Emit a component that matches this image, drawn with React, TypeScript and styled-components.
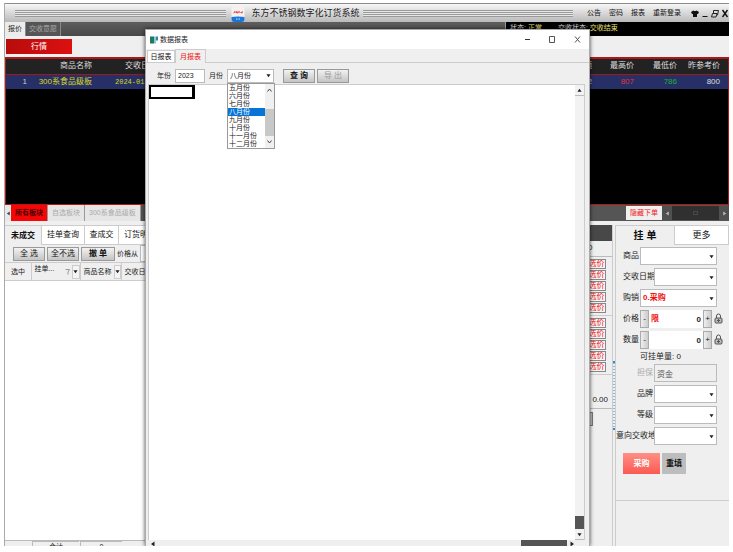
import React from "react";
import styled, { createGlobalStyle, css } from "styled-components";

const Global = createGlobalStyle`
  * { box-sizing: border-box; }
  body { margin: 0; background: #fff; }
  body, button, input, select, table {
    font-family: "Liberation Sans", "Noto Sans CJK SC", sans-serif;
    font-size: 8px;
    line-height: 10px;
    color: #222;
  }
  button, input, select { margin: 0; padding: 0; border-radius: 0; }
  button { white-space: pre; }
`;

const Frame = styled.div`
  position: relative;
  display: flex;
  flex-direction: column;
  height: calc(100vh - 9px);
  margin: 3px 4px 6px;
  overflow: hidden;
  background: #efefef;
  border-left: 1px solid #aaa;
`;

/* ---------- title bar ---------- */
const TitleBar = styled.header`
  flex: none;
  display: flex;
  align-items: center;
  height: 19px;
  border-top: 1px solid #8c8c8c;
  background: linear-gradient(#f7f7f7, #d8d8d8 50%, #b9b9b9);
`;
const Rules = styled.div<{ $before?: boolean }>`
  flex: 1 1 0;
  height: 7px;
  margin-left: ${(p) => (p.$before ? 10 : 3)}px;
  background: repeating-linear-gradient(#999 0 1px, #e8e8e8 1px 2px);
`;
const Logo = styled.svg`
  width: 14px;
  height: 17px;
  margin: 0 7px 0 5px;
`;
const AppTitle = styled.h1`
  margin: 0;
  font-size: 9px;
  line-height: 12px;
  font-weight: 400;
  white-space: nowrap;
`;
const TopMenu = styled.nav`
  display: flex;
  gap: 8px;
  margin-left: 14px;
`;
const Plain = styled.button`
  border: 0;
  background: none;
  font-size: 7px;
  color: #111;
`;
const WindowKeys = styled.div`
  display: flex;
  gap: 2px;
  margin-left: 10px;
`;
const Key = styled.button`
  display: flex;
  border: 0;
  background: none;
  svg { width: 8px; height: 9px; }
`;

/* ---------- upper strips ---------- */
const DarkStrip = styled.div`
  flex: none;
  display: flex;
  height: 14px;
  background: linear-gradient(#5e5e5e, #484848);
`;
const StripTab = styled.button<{ $on?: boolean }>`
  border: 0;
  border-right: 1px solid #888;
  padding: 0 3px;
  font-size: 7px;
  color: ${(p) => (p.$on ? "#222" : "#aaa")};
  background: ${(p) => (p.$on ? "#ececec" : "#555")};
`;
const Status = styled.div`
  display: flex;
  gap: 16px;
  width: 224px;
  margin-left: auto;
  padding: 1px 4px;
  font-size: 7px;
  color: #ddd;
  background: #000;
  border-left: 1px solid #999;
  b { font-weight: 400; color: #e8e070; }
`;
const QuoteTools = styled.div`
  flex: none;
  height: 21px;
  padding: 3px 1px;
  background: #efefef;
`;
const MarketButton = styled.button`
  width: 66px;
  height: 15px;
  border: 0;
  color: #fff;
  background: linear-gradient(90deg, #b80c0c, #dc1010);
`;
const QuoteArea = styled.div`
  flex: none;
  height: 148px;
  background: #000;
  border: 1px solid #b01818;
  border-top-width: 2px;
`;
const QuoteTable = styled.table`
  width: 100%;
  table-layout: fixed;
  border-collapse: collapse;
  th, td {
    height: 15px;
    padding: 0;
    text-align: right;
    font-weight: 400;
    white-space: nowrap;
  }
  th { color: #ddd; background: #222; border-bottom: 1px solid #a01818; }
  td { color: #d8d820; background: #273066; }
`;
const Col = styled.col<{ $w?: number }>`
  width: ${(p) => (p.$w ? `${p.$w}px` : "auto")};
`;
const Tint = styled.td<{ $c: string }>`
  && { color: ${(p) => p.$c}; }
`;
const DateCell = styled.td`
  font-family: "Liberation Mono", monospace;
  font-size: 7px;
`;

const BoardStrip = styled.div`
  flex: none;
  display: flex;
  height: 16px;
  background: #555;
`;
const BoardTab = styled.button<{ $on?: boolean }>`
  border: 0;
  border-right: 1px solid #999;
  padding: 0 4px;
  font-size: 7px;
  font-weight: ${(p) => (p.$on ? 700 : 400)};
  color: ${(p) => (p.$on ? "#400" : "#aaa")};
  background: ${(p) => (p.$on ? "#f60606" : "#e6e6e6")};
`;
const ArrowKey = styled.button<{ $dark?: boolean }>`
  display: flex;
  flex: none;
  align-items: center;
  justify-content: center;
  width: ${(p) => (p.$dark ? 10 : 6)}px;
  border: 0;
  background: ${(p) => (p.$dark ? "#505050" : "#e8e8e8")};
  color: ${(p) => (p.$dark ? "#bbb" : "#444")};
  svg { width: 5px; height: 5px; }
`;
const HideOrder = styled.button`
  width: 36px;
  margin: 1px 0 1px auto;
  border: 0;
  font-size: 7px;
  color: #f01818;
  background: #efefef;
`;
const DarkTrack = styled.div`
  display: flex;
  align-items: stretch;
  justify-content: space-between;
  width: 67px;
  margin: 1px 0;
  background: #303030;
  i { align-self: center; width: 5px; height: 4px; border: 1px solid #484848; }
`;

/* ---------- lower area ---------- */
const Lower = styled.main`
  flex: 1;
  min-height: 0;
  display: flex;
  padding-top: 4px;
  background: #efefef;
`;
const Orders = styled.section`
  flex: 1;
  min-width: 0;
  display: flex;
  flex-direction: column;
  overflow: hidden;
`;
const Tabs = styled.div`
  flex: none;
  display: flex;
  height: 20px;
`;
const Tab = styled.button<{ $on?: boolean; $w?: number }>`
  flex: ${(p) => (p.$w ? `0 0 ${p.$w}px` : "1 1 0")};
  border: 1px solid #ccc;
  border-left-width: 0;
  border-bottom-width: ${(p) => (p.$on ? 0 : 1)}px;
  font-size: 8px;
  font-weight: ${(p) => (p.$on ? 700 : 400)};
  color: #111;
  background: ${(p) => (p.$on ? "#efefef" : "#fff")};
`;
const Tools = styled.div`
  flex: none;
  display: flex;
  gap: 2px;
  align-items: center;
  height: 17px;
  padding-left: 8px;
  font-size: 7px;
  label { white-space: nowrap; }
`;
const Button = styled.button<{ $w: number; $off?: boolean; $bold?: boolean }>`
  flex: none;
  width: ${(p) => p.$w}px;
  height: 14px;
  border: 1px solid #999;
  font-size: 8px;
  font-weight: ${(p) => (p.$bold ? 700 : 400)};
  color: ${(p) => (p.$off ? "#999" : "#111")};
  background: linear-gradient(#f2f2f2, #c4c4c4);
`;
const TextBox = styled.input<{ $w?: number; $bold?: boolean; $right?: boolean }>`
  ${(p) => (p.$w ? css`flex: none; width: ${p.$w}px;` : css`flex: 1; min-width: 0; width: 0;`)}
  height: 100%;
  padding: 0 2px;
  border: 1px solid #bbb;
  font-weight: ${(p) => (p.$bold ? 700 : 400)};
  text-align: ${(p) => (p.$right ? "right" : "left")};
  background: #fff;
  &:disabled { color: #555; background: #efefef; }
`;
const ListTable = styled.table`
  border-collapse: collapse;
  table-layout: fixed;
  width: 300px;
  flex: none;
  th {
    height: 18px;
    padding: 0 0 0 3px;
    font-size: 7px;
    font-weight: 400;
    text-align: left;
    border: 1px solid #ccc;
    border-left-width: 0;
  }
  th:first-child { padding-left: 6px; }
`;
const HeadCell = styled.span<{ $up?: boolean }>`
  display: flex;
  align-items: center;
  gap: 2px;
  white-space: nowrap;
  span { flex: 1; padding-bottom: ${(p) => (p.$up ? 6 : 0)}px; }
`;
const MiniDrop = styled.button`
  display: flex;
  align-items: center;
  justify-content: center;
  width: 8px;
  height: 14px;
  border: 1px solid #ccc;
  background: #f4f4f4;
  svg { width: 5px; height: 5px; }
`;
const FilterIcon = styled.svg`
  width: 5px;
  height: 6px;
`;
const Blank = styled.div`
  flex: 1;
  background: #fff;
`;
const Totals = styled.div`
  flex: none;
  display: flex;
  gap: 1px;
  height: 6px;
  padding-left: 27px;
  overflow: hidden;
  font-size: 7px;
  line-height: 9px;
  text-align: center;
  border-top: 1px solid #bbb;
  span { width: 47px; border-top: 1px solid #bbb; border-left: 1px solid #bbb; }
  span + span { width: 42px; }
`;

const Quotes = styled.aside`
  flex: none;
  width: 24px;
  display: flex;
  flex-direction: column;
  overflow: hidden;
`;
const QuotesHead = styled.div`
  height: 16px;
  background: #484848;
`;
const Figure = styled.div<{ $h: number; $left?: boolean }>`
  display: flex;
  align-items: flex-end;
  justify-content: ${(p) => (p.$left ? "flex-start" : "flex-end")};
  height: ${(p) => p.$h}px;
  padding: 0 4px 3px 0;
  border-bottom: 1px solid #bbb;
`;
const PickGroup = styled.div`
  display: grid;
  grid-template-columns: 18px;
  grid-auto-rows: 10px;
  gap: 1px;
  padding: 2px 0;
  border-bottom: 1px solid #ccc;
`;
const Pick = styled.button`
  overflow: hidden;
  border: 1px solid #888;
  border-left: 0;
  font-size: 8px;
  line-height: 8px;
  color: #f01818;
  background: #f4f4f4;
`;
const PartButton = styled.button`
  width: 5px;
  height: 14px;
  margin-top: 3px;
  border: 1px solid #777;
  background: #bbb;
`;
const Splitter = styled.div`
  flex: none;
  width: 4px;
  border: solid #ccc;
  border-width: 0 1px;
  padding-top: 136px;
`;
const Grip = styled.div`
  height: 69px;
  border: solid #2c8fd8;
  border-width: 2px 0;
  background: repeating-linear-gradient(#8fb8d8 0 1px, #efefef 1px 3px);
`;

const OrderPanel = styled.section`
  flex: none;
  width: 113px;
  display: flex;
  flex-direction: column;
`;
const BigTab = styled(Tab)`
  font-size: ${(p) => (p.$on ? 10 : 9)}px;
`;
const Form = styled.form`
  display: flex;
  flex-direction: column;
  gap: 3px;
  height: 256px;
  padding: 2px 12px 0 0;
  border-bottom: 1px solid #ccc;
`;
const Field = styled.div<{ $label: number; $off?: boolean; $end?: boolean }>`
  display: grid;
  grid-template-columns: ${(p) => p.$label}px 1fr;
  align-items: center;
  height: 18px;
  label {
    padding: ${(p) => (p.$end ? "0 1px 0 0" : "0 0 0 7px")};
    text-align: ${(p) => (p.$end ? "right" : "left")};
    white-space: nowrap;
    color: ${(p) => (p.$off ? "#aaa" : "#222")};
  }
`;
const Picker = styled.div`
  display: grid;
  height: 100%;
  align-items: center;
  svg { grid-area: 1 / 1; justify-self: end; width: 5px; height: 5px; margin-right: 3px; pointer-events: none; }
`;
const Select = styled.select<{ $red?: boolean }>`
  grid-area: 1 / 1;
  appearance: none;
  width: 100%;
  height: 100%;
  padding-left: 2px;
  border: 1px solid #bbb;
  font-weight: ${(p) => (p.$red ? 700 : 400)};
  color: ${(p) => (p.$red ? "#f01010" : "#222")};
  background: #fff;
`;
const Stepper = styled.div`
  display: flex;
  height: 100%;
  margin-right: -6px;
`;
const StepBox = styled.div`
  flex: 1;
  display: flex;
  align-items: center;
  min-width: 0;
  background: #fff;
  b { color: #f01010; padding-left: 2px; }
  input { border: 0; }
`;
const Step = styled.button`
  width: 9px;
  border: 1px solid #aaa;
  background: linear-gradient(90deg, #eee, #ccc);
`;
const Lock = styled.svg`
  width: 9px;
  height: 11px;
  margin: 3px 0 0 2px;
`;
const Available = styled.div`
  height: 9px;
  padding-left: 24px;
  line-height: 9px;
  white-space: nowrap;
`;
const Actions = styled.div`
  display: flex;
  gap: 2px;
  padding: 5px 0 0 7px;
`;
const Act = styled.button<{ $buy?: boolean }>`
  width: ${(p) => (p.$buy ? 37 : 24)}px;
  height: 21px;
  border: 0;
  font-weight: 700;
  color: ${(p) => (p.$buy ? "#fff" : "#111")};
  background: ${(p) => (p.$buy ? "linear-gradient(#ff8f85, #fb5a52)" : "#bdbdbd")};
`;

/* ---------- report window ---------- */
const Report = styled.section`
  position: absolute;
  top: 26px;
  bottom: 0;
  left: 140px;
  right: 139px;
  display: flex;
  flex-direction: column;
  background: #efefef;
  border: solid #aaa;
  border-width: 1px 1px 0 1px;
  box-shadow: 0 0 4px rgba(0, 0, 0, 0.7);
`;
const ReportTitle = styled.header`
  flex: none;
  display: flex;
  align-items: center;
  height: 19px;
  padding: 0 8px 0 4px;
  background: #fff;
  h2 { flex: 1; margin: 0 0 0 2px; font-size: 7px; font-weight: 400; }
`;
const ReportIcon = styled.svg`
  width: 8px;
  height: 8px;
`;
const ReportKey = styled.button`
  display: flex;
  margin-left: 18px;
  border: 0;
  background: none;
  svg { width: 7px; height: 7px; }
`;
const ReportTabs = styled.div`
  flex: none;
  display: flex;
  align-items: flex-end;
  height: 14px;
  padding-left: 1px;
  border-bottom: 1px solid #ccc;
`;
const ReportTab = styled.button<{ $on?: boolean }>`
  width: ${(p) => (p.$on ? 31 : 28)}px;
  height: ${(p) => (p.$on ? 14 : 12)}px;
  margin-bottom: ${(p) => (p.$on ? -1 : 0)}px;
  border: 1px solid #ccc;
  border-bottom: 0;
  font-size: 7px;
  color: ${(p) => (p.$on ? "#f01010" : "#111")};
  background: ${(p) => (p.$on ? "#efefef" : "#fff")};
`;
const Filters = styled.form`
  flex: none;
  display: flex;
  align-items: center;
  height: 21px;
  padding: 4px 0 0 11px;
  font-size: 7px;
  input, select { font-size: 7px; }
  button { margin-left: 9px; }
  button + button { margin-left: 2px; }
  label { width: 18px; }
`;
const YearBox = styled.div`
  display: flex;
  width: 30px;
  height: 14px;
  margin-right: 4px;
`;
const MonthBox = styled.div`
  position: relative;
  width: 47px;
  height: 14px;
`;
const MonthList = styled.div`
  position: absolute;
  z-index: 1;
  top: 14px;
  left: 0;
  display: flex;
  width: 48px;
  height: 66px;
  border: 1px solid #999;
  background: #fff;
`;
const Options = styled.ul`
  flex: 1;
  margin: 0;
  padding: 0;
  list-style: none;
`;
const Option = styled.li<{ $on?: boolean }>`
  height: 8px;
  padding-left: 1px;
  font-size: 7px;
  line-height: 8px;
  white-space: nowrap;
  color: ${(p) => (p.$on ? "#fff" : "#222")};
  background: ${(p) => (p.$on ? "#0a74d6" : "transparent")};
`;
const ListScroll = styled.div`
  display: flex;
  flex-direction: column;
  align-items: center;
  width: 9px;
  padding: 4px 0;
  background: #f0f0f0;
  svg { width: 5px; height: 4px; }
  i { width: 9px; height: 27px; margin: 17px 0 4px; background: #c8c8c8; }
`;
const SheetRow = styled.div`
  flex: 1;
  min-height: 0;
  display: flex;
  margin: 0 4px 0 2px;
  border: solid #ccc;
  border-width: 1px 1px 0 1px;
  background: #fff;
`;
const Sheet = styled.div`
  flex: 1;
`;
const ActiveCell = styled.div`
  width: 46px;
  height: 14px;
  border: 2px solid #000;
  border-right-width: 3px;
`;
const VScroll = styled.div`
  display: flex;
  flex-direction: column;
  width: 9px;
  background: #f2f2f2;
  i { height: 13px; margin-top: auto; background: #555; }
`;
const VKey = styled.button`
  display: flex;
  align-items: center;
  justify-content: center;
  height: 11px;
  border: 0;
  border-bottom: 1px solid #bbb;
  background: #f2f2f2;
  svg { width: 5px; height: 5px; }
`;
const HScroll = styled.div`
  flex: none;
  display: flex;
  align-items: flex-start;
  height: 6px;
  margin: 0 12px 0 2px;
  overflow: hidden;
  background: #efefef;
  svg { width: 6px; height: 6px; margin: 1px 2px 0; }
  i { width: 46px; height: 6px; margin-left: auto; background: #555; }
`;

const turns = { down: 0, left: 90, up: 180, right: 270 };
const Arrow = ({ to = "down" }: { to?: keyof typeof turns }) => (
  <svg viewBox="0 0 6 6" aria-hidden="true">
    <path d="M0.500 1.500h5L3 5z" fill="currentColor" transform={`rotate(${turns[to]} 3 3)`} />
  </svg>
);
const LockIcon = () => (
  <Lock viewBox="0 0 9 11" fill="none" stroke="#555">
    <path d="M2.500 5V3a2 2 0 0 1 4 0v2" />
    <rect x="1" y="5" width="7" height="5" rx="1" fill="#bbb" />
    <path d="M4.500 6v3M3 7.500h3" />
  </Lock>
);

const Dropdown = ({ id, value = "", red }: { id: string; value?: string; red?: boolean }) => (
  <Picker>
    <Select id={id} $red={red} defaultValue={value}>
      <option>{value}</option>
    </Select>
    <Arrow />
  </Picker>
);

const StepField = ({ id, label, limit }: { id: string; label: string; limit?: boolean }) => (
  <Field $label={24}>
    <label htmlFor={id}>{label}</label>
    <Stepper>
      <Step type="button">-</Step>
      <StepBox>
        {limit && <b>限</b>}
        <TextBox id={id} defaultValue="0" $bold $right />
      </StepBox>
      <Step type="button">+</Step>
      <LockIcon />
    </Stepper>
  </Field>
);

const months = ["五月份", "六月份", "七月份", "八月份", "九月份", "十月份", "十一月份", "十二月份"];

export default function App() {
  return (
    <>
      <Global />
      <Frame>
        <TitleBar>
          <Rules $before />
          <Logo viewBox="0 0 14 17">
            <rect x="0.500" y="0.500" width="13" height="16" rx="3" fill="#f4f1f0" />
            <path d="M0.500 12q6.500 -1 13 0v2q0 3-3 3h-7q-3 0-3-3z" fill="#1976dc" />
            <path d="M2 8.500l2-3 .8 2 1-2 1.200 2 1-2 1.200 2 3-1.500-1 2.500-3-1-2 1-2-1z" fill="#e6463c" />
            <path d="M5 14h1.500M7.500 14H9" stroke="#cfe4fa" />
          </Logo>
          <AppTitle>东方不锈钢数字化订货系统</AppTitle>
          <Rules />
          <TopMenu>
            {["公告", "密码", "报表", "重新登录"].map((t) => (
              <Plain key={t}>{t}</Plain>
            ))}
          </TopMenu>
          <WindowKeys>
            <Key aria-label="皮肤">
              <svg viewBox="0 0 8 9"><path d="M2.500 1.500q1.500 1 3 0L8 3 7 5H6v3H2V5H1L0 3z" fill="#111" /></svg>
            </Key>
            <Key aria-label="最小化">
              <svg viewBox="0 0 8 9"><path d="M1.500 7.500h5" stroke="#111" /></svg>
            </Key>
            <Key aria-label="还原">
              <svg viewBox="0 0 8 9" fill="none" stroke="#222"><path d="M2.500 4V1.500h5L6.500 6H6M1.500 4.500h4.500l-1 3.500H0.500z" /></svg>
            </Key>
            <Key aria-label="关闭">
              <svg viewBox="0 0 8 9"><path d="M1.500 1l5 7M6.500 1l-5 7" stroke="#111" strokeWidth="1.400" /></svg>
            </Key>
          </WindowKeys>
        </TitleBar>

        <DarkStrip>
          <StripTab $on>报价</StripTab>
          <StripTab>交收意愿</StripTab>
          <Status>
            <span>状态: <b>正常</b></span>
            <span>交收状态: <b>交收结束</b></span>
          </Status>
        </DarkStrip>
        <QuoteTools>
          <MarketButton>行情</MarketButton>
        </QuoteTools>
        <QuoteArea>
          <QuoteTable>
            <colgroup>
              <Col $w={21} />
              <Col $w={65} />
              <Col $w={65} />
              <Col />
              <Col $w={42} />
              <Col $w={43} />
              <Col $w={43} />
              <Col $w={8} />
            </colgroup>
            <thead>
              <tr>
                <th />
                <th>商品名称</th>
                <th>交收日期</th>
                <th>金额</th>
                <th>最高价</th>
                <th>最低价</th>
                <th>昨参考价</th>
                <th />
              </tr>
            </thead>
            <tbody>
              <tr>
                <Tint $c="#ccc">1</Tint>
                <td>300系食品级板</td>
                <DateCell>2024-01-31</DateCell>
                <Tint $c="#ccc">2</Tint>
                <Tint $c="#e03038">807</Tint>
                <Tint $c="#18b030">786</Tint>
                <Tint $c="#ddd">800</Tint>
                <td />
              </tr>
            </tbody>
          </QuoteTable>
        </QuoteArea>
        <BoardStrip>
          <ArrowKey aria-label="向左"><Arrow to="left" /></ArrowKey>
          <BoardTab $on>所有板块</BoardTab>
          <BoardTab>自选板块</BoardTab>
          <BoardTab>300系食品级板</BoardTab>
          <HideOrder>隐藏下单</HideOrder>
          <DarkTrack>
            <ArrowKey $dark aria-label="向左滚动"><Arrow to="left" /></ArrowKey>
            <i />
            <ArrowKey $dark aria-label="向右滚动"><Arrow to="right" /></ArrowKey>
          </DarkTrack>
        </BoardStrip>

        <Lower>
          <Orders>
            <Tabs>
              <Tab $on $w={37}>未成交</Tab>
              <Tab $w={43}>挂单查询</Tab>
              <Tab $w={34}>查成交</Tab>
              <Tab $w={43}>订货明细</Tab>
            </Tabs>
            <Tools>
              <Button $w={32}>全 选</Button>
              <Button $w={32}>全不选</Button>
              <Button $w={34} $bold>撤 单</Button>
              <label htmlFor="from">价格从</label>
              <TextBox id="from" $w={40} />
            </Tools>
            <ListTable>
              <colgroup>
                <Col $w={26} />
                <Col $w={49} />
                <Col $w={41} />
                <Col />
              </colgroup>
              <thead>
                <tr>
                  <th><HeadCell><span>选中</span></HeadCell></th>
                  <th>
                    <HeadCell $up>
                      <span>挂单...</span>
                      <FilterIcon viewBox="0 0 5 6"><path d="M0.500 0.500h4L3 3v2.500" fill="none" stroke="#999" /></FilterIcon>
                      <MiniDrop aria-label="筛选挂单"><Arrow /></MiniDrop>
                    </HeadCell>
                  </th>
                  <th>
                    <HeadCell>
                      <span>商品名称</span>
                      <MiniDrop aria-label="筛选商品"><Arrow /></MiniDrop>
                    </HeadCell>
                  </th>
                  <th><HeadCell><span>交收日期</span></HeadCell></th>
                </tr>
              </thead>
            </ListTable>
            <Blank />
            <Totals><span>合计</span><span>0</span></Totals>
          </Orders>

          <Quotes>
            <QuotesHead />
            <Figure $h={16} $left>0</Figure>
            <PickGroup>
              {[1, 2, 3, 4, 5].map((n) => <Pick key={n}>选价</Pick>)}
            </PickGroup>
            <PickGroup>
              {[1, 2, 3, 4, 5].map((n) => <Pick key={n}>选价</Pick>)}
            </PickGroup>
            <Figure $h={34}>0.00</Figure>
            <PartButton aria-label="全部" />
          </Quotes>
          <Splitter><Grip /></Splitter>

          <OrderPanel>
            <Tabs>
              <BigTab $on $w={59}>挂 单</BigTab>
              <BigTab>更多</BigTab>
            </Tabs>
            <Form>
              <Field $label={24}>
                <label htmlFor="goods">商品</label>
                <Dropdown id="goods" />
              </Field>
              <Field $label={38}>
                <label htmlFor="date">交收日期</label>
                <Dropdown id="date" />
              </Field>
              <Field $label={24}>
                <label htmlFor="side">购销</label>
                <Dropdown id="side" value="0.采购" red />
              </Field>
              <StepField id="price" label="价格" limit />
              <StepField id="amount" label="数量" />
              <Available>可挂单量: 0</Available>
              <Field $label={38} $off $end>
                <label htmlFor="bond">担保</label>
                <TextBox id="bond" defaultValue="资金" disabled $w={63} />
              </Field>
              <Field $label={38} $end>
                <label htmlFor="brand">品牌</label>
                <Dropdown id="brand" />
              </Field>
              <Field $label={38} $end>
                <label htmlFor="grade">等级</label>
                <Dropdown id="grade" />
              </Field>
              <Field $label={38} $end>
                <label htmlFor="place">意向交收地</label>
                <Dropdown id="place" />
              </Field>
              <Actions>
                <Act type="button" $buy>采购</Act>
                <Act type="reset">重填</Act>
              </Actions>
            </Form>
          </OrderPanel>
        </Lower>

        <Report role="dialog" aria-label="数据报表">
          <ReportTitle>
            <ReportIcon viewBox="0 0 8 8">
              <rect x="0" y="0.500" width="4" height="7" fill="#1f7a63" />
              <rect x="4" y="0.500" width="2" height="7" fill="#8fc8c8" />
              <rect x="6" y="0.500" width="2" height="4" fill="#3c7fc0" />
            </ReportIcon>
            <h2>数据报表</h2>
            <ReportKey aria-label="最小化窗口">
              <svg viewBox="0 0 7 7"><path d="M1 3.500h5" stroke="#333" /></svg>
            </ReportKey>
            <ReportKey aria-label="最大化窗口">
              <svg viewBox="0 0 7 7"><path d="M0.500 0.500h5v6h-5z" fill="none" stroke="#555" /></svg>
            </ReportKey>
            <ReportKey aria-label="关闭窗口">
              <svg viewBox="0 0 7 7"><path d="M1 0.500l5 6M6 0.500l-5 6" stroke="#555" /></svg>
            </ReportKey>
          </ReportTitle>
          <ReportTabs>
            <ReportTab>日报表</ReportTab>
            <ReportTab $on>月报表</ReportTab>
          </ReportTabs>
          <Filters>
            <label htmlFor="year">年份</label>
            <YearBox><TextBox id="year" defaultValue="2023" /></YearBox>
            <label htmlFor="month">月份</label>
            <MonthBox>
              <Dropdown id="month" value="八月份" />
              <MonthList>
                <Options role="listbox" aria-label="月份">
                  {months.map((m) => (
                    <Option key={m} role="option" aria-selected={m === "八月份"} $on={m === "八月份"}>{m}</Option>
                  ))}
                </Options>
                <ListScroll>
                  <svg viewBox="0 0 5 4"><path d="M0.500 3.500l2-2.500 2 2.500" fill="none" stroke="#444" /></svg>
                  <i />
                  <svg viewBox="0 0 5 4"><path d="M0.500 0.500l2 2.500 2-2.500" fill="none" stroke="#444" /></svg>
                </ListScroll>
              </MonthList>
            </MonthBox>
            <Button type="button" $w={32} $bold>查 询</Button>
            <Button type="button" $w={32} $off>导 出</Button>
          </Filters>
          <SheetRow>
            <Sheet><ActiveCell /></Sheet>
            <VScroll>
              <VKey aria-label="向上滚动"><Arrow to="up" /></VKey>
              <i />
              <VKey aria-label="向下滚动"><Arrow /></VKey>
            </VScroll>
          </SheetRow>
          <HScroll>
            <Arrow to="left" />
            <i />
            <Arrow to="right" />
          </HScroll>
        </Report>
      </Frame>
    </>
  );
}
